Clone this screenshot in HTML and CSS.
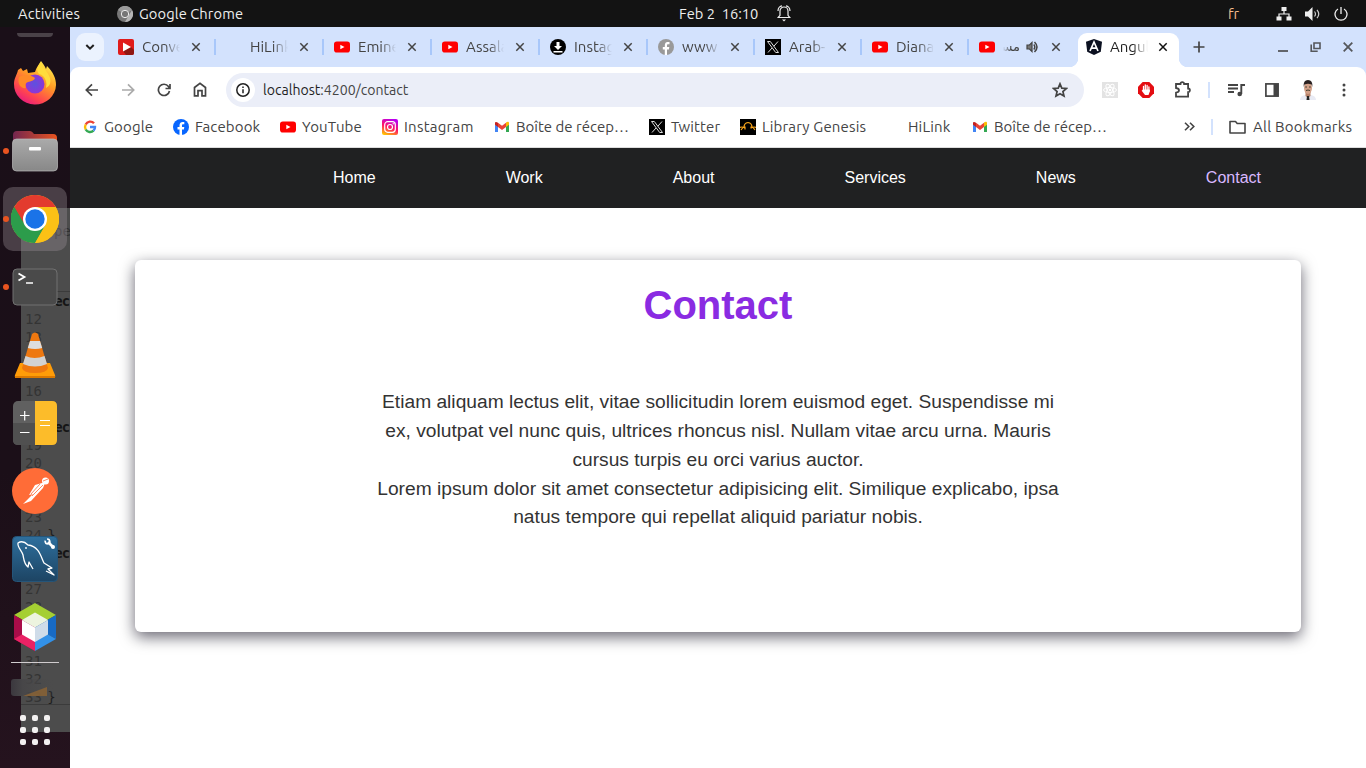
FILE: index.html
```html
<!DOCTYPE html>
<html lang="en">
<head>
<meta charset="utf-8">
<title>Contact</title>
<link rel="stylesheet" href="styles.css">
</head>
<body>
<svg class="defs" width="0" height="0">
  <symbol id="close" viewBox="0 0 16 16"><path d="M4.300 4.300l7.400 7.400M11.700 4.300l-7.400 7.400" fill="none" stroke="currentColor" stroke-width="1.500"/></symbol>
  <symbol id="youtube" viewBox="0 0 16 16"><rect y="2.500" width="16" height="11" rx="2.800" fill="#f00"/><path d="M6.300 5.700l4.200 2.300-4.200 2.300z" fill="#fff"/></symbol>
  <symbol id="x" viewBox="0 0 16 16"><path d="M0 0h16v16H0z" fill="#000"/><path d="M2.500 2.500h2.800l8.200 11h-2.800zM13 2.500L8.900 7.200M7 9l-4 4.500" fill="none" stroke="#ddd" stroke-width="1"/></symbol>
  <symbol id="gmail" viewBox="0 0 16 16"><path d="M1 4.800v8.300h3V7z" fill="#4285f4"/><path d="M12 7v6.100h3V4.800z" fill="#34a853"/><path d="M12 3.500V8l3-2.300V4c0-1.300-1.500-1.600-3-.5z" fill="#fbbc04"/><path d="M4 3.700l4 3 4-3V8l-4 3-4-3z" fill="#ea4335"/><path d="M1 4v1.700L4 8V3.700C2.300 2.400 1 2.800 1 4z" fill="#c5221f"/></symbol>
</svg>

<header class="topbar">
  <span class="activities">Activities</span>
  <span class="app">
    <svg width="16" height="16" viewBox="0 0 16 16"><circle cx="8" cy="8" r="8" fill="#777"/><path d="M8 8L1 4a8 8 0 0 1 14 0z" fill="#999"/><path d="M8 16l4-7 3-5a8 8 0 0 1-7 12z" fill="#b5b5b5"/><circle cx="8" cy="8" r="3.700" fill="#777" stroke="#eee" stroke-width="1"/></svg>
    <span class="appname">Google Chrome</span>
  </span>
  <span class="clock">Feb 2&nbsp; 16:10</span>
  <svg class="bell" width="14" height="17" viewBox="0 0 14 17" fill="none" stroke="#eee" stroke-width="1.200"><path d="M1.200 12.500L3 10.300V6a4 4 0 0 1 8 0v4.300l1.800 2.200zM1 6C1 3 3 1 5 .8M13 6c0-3-2-5-4-5.200"/><path d="M5 14.500h4l-2 2z" fill="#eee" stroke="none"/></svg>
  <span class="lang">fr</span>
  <span class="status">
    <svg width="16" height="14" viewBox="0 0 16 14"><path d="M5.500 0h5v4h-5zM.5 9.500h5v4h-5zM10.500 9.500h5v4h-5z" fill="#eee"/><path d="M8 3v4M3 10V7h10v3" fill="none" stroke="#eee" stroke-width="1.200"/></svg>
    <svg width="16" height="14" viewBox="0 0 16 14"><path d="M0 4.500h3L7.500 0v14L3 9.500H0z" fill="#eee"/><path d="M9.500 4.500q2 2.500 0 5M12 2.800q3.500 4.200 0 8.400" fill="none" stroke="#ccc" stroke-width="1.200"/></svg>
    <svg width="14" height="14" viewBox="0 0 14 14" fill="none" stroke="#eee" stroke-width="1.300"><path d="M4 2a6 6 0 1 0 6 0M7 0v7"/></svg>
  </span>
</header>

<div class="desktop">
  <aside class="dock">
    <pre class="editor">
 

   <b>ec</b>
12
13


16

   <b>ec</b>
19
20


23
24 <s>}</s>
   <b>ec</b>

27
28


31
32
33 <s>}</s></pre>
    <div class="editor-tab">pe</div>
    <div class="rule upper"></div>
    <div class="rule lower"></div>
    <div class="stub"></div>
    <div class="launcher"><svg width="44" height="46" viewBox="0 0 44 46"><defs><linearGradient id="ff" x1=".8" y1="0" x2=".2" y2="1"><stop stop-color="#fff44f"/><stop offset=".4" stop-color="#ff9b25"/><stop offset=".75" stop-color="#ff4450"/><stop offset="1" stop-color="#e31587"/></linearGradient><radialGradient id="ffp"><stop stop-color="#5b52e0"/><stop offset="1" stop-color="#9035d5"/></radialGradient></defs><path d="M22 12C23 8 26 4 28 1c2 3 4 5 5 8l1-3c6 6 9 12 9 19A21 20 0 0 1 1 24C1 18 4 15 5 10l3-2 2 3 4-2 1 4z" fill="url(#ff)"/><circle cx="22" cy="24" r="9.500" fill="url(#ffp)"/><path d="M6 17c5-2 12-2 16 1-1 3-4 3-7 4-3 1-3 4-2 6-5 1-9-4-7-11z" fill="#ff8a28"/><path d="M26 14q5 1 7 7 1 3 0 7 6-3 4-10c-2-6-7-10-9-16-4 5-5 8-2 12z" fill="#ffdc3c"/></svg></div>
    <div class="launcher open"><svg width="46" height="42" viewBox="0 0 46 42"><defs><linearGradient id="fo"><stop stop-color="#73264f"/><stop offset="1" stop-color="#e95420"/></linearGradient><linearGradient id="fg" x2="0" y2="1"><stop stop-color="#aaa"/><stop offset="1" stop-color="#888"/></linearGradient></defs><path d="M1 5q0-4 4-4h13q2 0 4 3h19q4 0 4 4v8H1z" fill="url(#fo)"/><rect x=".5" y="9" width="45" height="32" rx="4" fill="url(#fg)" stroke="#bbb" stroke-width=".7"/><rect x="17" y="17" width="12" height="3.500" rx="1" fill="#fff"/></svg></div>
    <div class="launcher open current"><svg width="48" height="48" viewBox="0 0 48 48"><circle cx="24" cy="24" r="24" fill="#fbc116"/><path d="M24 24L3.200 12A24 24 0 0 1 44.800 12H24z" fill="#e33b2e"/><path d="M3.200 12A24 24 0 0 0 24 48l10.400-18z" fill="#2c9c4b"/><path d="M3.200 12L14 30h20L24 12z" fill="#e33b2e"/><path d="M3.200 12l10.400 18L24 36 34.400 30 24 48A24 24 0 0 1 3.200 12z" fill="#2c9c4b"/><path d="M24 12h20.800A24 24 0 0 1 24 48l10.400-18z" fill="#fbc116"/><circle cx="24" cy="24" r="12" fill="#fff"/><circle cx="24" cy="24" r="9.700" fill="#1a73e8"/></svg></div>
    <div class="launcher open"><svg width="46" height="38" viewBox="0 0 46 38"><rect x="1" y="1" width="44" height="36" rx="4" fill="#4a4a4a" stroke="#707070"/><path d="M6.500 5.500l6 3.500-6 3.500" fill="none" stroke="#fff" stroke-width="1.800"/><path d="M14 15h7" stroke="#fff" stroke-width="1.500"/></svg></div>
    <div class="launcher"><svg width="42" height="47" viewBox="0 0 42 47"><path d="M6 31h30l5 12q1 3-2 3H3q-3 0-2-3z" fill="#ff9c08"/><path d="M1 44h40v2H1z" fill="#db7900"/><path d="M18 2q3-3 6 0l10 34q-1 5-13 5T8 36z" fill="#ee7810"/><path d="M16 9h10l2.200 7q-7 2-14.400 0z" fill="#ddd"/><path d="M11.500 24q9 4 19 0l2.500 8q-12 5-24 0z" fill="#d2d2d2"/></svg></div>
    <div class="launcher"><svg width="44" height="44" viewBox="0 0 44 44"><rect width="44" height="44" rx="5" fill="#606060"/><path d="M0 22h22v22H5q-5 0-5-5z" fill="#505050"/><path d="M22 0h17q5 0 5 5v34q0 5-5 5H22z" fill="#fcbc2a"/><path d="M7 14.500h9.500M11.700 10v9.500M7 31.500h9.500M27 19.500h10M27 24.500h10" stroke="#fff" stroke-width="1.200"/></svg></div>
    <div class="launcher"><svg width="46" height="46" viewBox="0 0 46 46"><circle cx="23" cy="23" r="23" fill="#ff6c37"/><circle cx="33.500" cy="13" r="3.500" fill="#fff"/><path d="M30 15l-7 2-6 10 4-1-4 4-6 6 8-3 12-13 2-5z" fill="#fff"/><path d="M31 17L20 28M28 16l-9 10M31 13l5-2" stroke="#ff6c37" stroke-width=".8"/></svg></div>
    <div class="launcher"><svg width="46" height="46" viewBox="0 0 46 46"><defs><linearGradient id="my" x2="0" y2="1"><stop stop-color="#2e6f9d"/><stop offset="1" stop-color="#1d4463"/></linearGradient></defs><rect x=".5" y=".5" width="45" height="45" rx="4" fill="url(#my)" stroke="#255579"/><path d="M21 33L17 26 16 31C12 28 12 24 11 19 10 15 5 11 6 7 9 5 13 6 16 9 27 10 29 21 32 27L40 32 36 33 42 39 34 35" fill="none" stroke="#fff" stroke-width="1.300" stroke-linejoin="round"/><circle cx="14" cy="12" r=".9" fill="#fff"/><path d="M36 6l5 5" stroke="#fff" stroke-width="2.600"/><circle cx="35.500" cy="5.500" r="2.300" fill="none" stroke="#fff" stroke-width="1.700" stroke-dasharray="11 4" transform="rotate(260 35.500 5.500)"/><circle cx="41" cy="11" r="2" fill="#fff"/></svg></div>
    <div class="launcher"><svg width="42" height="48" viewBox="0 0 42 48"><path d="M21 0l21 12-21 12L0 12z" fill="#a5cf32"/><path d="M0 12l21 12v24L0 36z" fill="#a90d49"/><path d="M0 36l21-12v24z" fill="#ea2265"/><path d="M42 12L21 24l21 12z" fill="#176ac5"/><path d="M42 36L21 24v24z" fill="#3291e8"/><path d="M21 9.500L34 17 21 24.500 8 17z" fill="#edf4df"/><path d="M8 17l13 7.500V39L8 31.500z" fill="#fff"/><path d="M34 17l-13 7.500V39l13-7.500z" fill="#cfdce9"/></svg></div>
    <div class="divider"></div>
    <svg class="drive" width="48" height="17" viewBox="0 0 48 17"><defs><linearGradient id="dr"><stop stop-color="#3b383e"/><stop offset=".25" stop-color="#474648"/><stop offset="1" stop-color="#4c4c4c" stop-opacity="0"/></linearGradient></defs><rect width="46" height="17" rx="3" fill="url(#dr)"/><path d="M12 17l24-9v9z" fill="#8a6335" opacity=".85"/></svg>
    <div class="grid"><i></i><i></i><i></i><i></i><i></i><i></i><i></i><i></i><i></i></div>
  </aside>

  <main class="browser">
    <div class="tabstrip">
      <button class="tabsearch"><svg width="10" height="8" viewBox="0 0 10 8"><path d="M1.300 2l3.700 3.700L8.700 2" fill="none" stroke="#1f1f1f" stroke-width="2"/></svg></button>
      <div class="tabs">
        <div class="tab"><svg class="ico" viewBox="0 0 16 16"><rect width="16" height="16" rx="2" fill="#e01b1b"/><path d="M5 12l8-4 3 3v3q0 2-2 2H8z" fill="#8f1712"/><path d="M5 3.500l8 4.500-8 4.500z" fill="#fff"/></svg><span class="title">Conve</span><svg class="x"><use href="#close"/></svg></div>
        <div class="tab"><span class="ico"></span><span class="title">HiLink</span><svg class="x"><use href="#close"/></svg></div>
        <div class="tab"><svg class="ico"><use href="#youtube"/></svg><span class="title">Emine</span><svg class="x"><use href="#close"/></svg></div>
        <div class="tab"><svg class="ico"><use href="#youtube"/></svg><span class="title">Assala</span><svg class="x"><use href="#close"/></svg></div>
        <div class="tab"><svg class="ico" viewBox="0 0 16 16"><circle cx="8" cy="8" r="8"/><path d="M6.500 3h3v4H12l-4 4-4-4h2.500zM3.500 12h9v1.400h-9z" fill="#fff"/></svg><span class="title">Instag</span><svg class="x"><use href="#close"/></svg></div>
        <div class="tab"><svg class="ico" viewBox="0 0 16 16"><circle cx="8" cy="8" r="8" fill="#999"/><path d="M6.800 16v-5.500h-2V8h2V6.500C6.800 4 8 3 9.500 3h2v2.200H10c-.7 0-1 .4-1 1.100V8h2.300l-.4 2.500H9V16z" fill="#fff"/></svg><span class="title">www</span><svg class="x"><use href="#close"/></svg></div>
        <div class="tab"><svg class="ico"><use href="#x"/></svg><span class="title">Arab-</span><svg class="x"><use href="#close"/></svg></div>
        <div class="tab"><svg class="ico"><use href="#youtube"/></svg><span class="title">Diana</span><svg class="x"><use href="#close"/></svg></div>
        <div class="tab last"><svg class="ico"><use href="#youtube"/></svg><span class="title rtl" dir="rtl">مسـ</span><svg class="sound" width="13" height="12" viewBox="0 0 13 12"><path d="M1 4h2.500L6 1.500v9L3.500 8H1z" fill="#777" stroke="#444" stroke-width="1.200"/><path d="M7.800 3.500q2 2.500 0 5M8.500 1q5 5 0 10" fill="none" stroke="#444" stroke-width="1.500"/></svg><svg class="x"><use href="#close"/></svg></div>
        <div class="tab active"><svg class="ico" viewBox="0 0 16 16"><path d="M8 0l8 2.700-1.200 10L8 16l-6.800-3.300L0 2.700z" fill="#0b1020"/><path d="M4 12l4-9 4 9M5.700 9.200h4.600" fill="none" stroke="#fff" stroke-width="1.700"/></svg><span class="title">Angul</span><svg class="x"><use href="#close"/></svg></div>
      </div>
      <svg class="newtab" width="12" height="12" viewBox="0 0 12 12"><path d="M6 .5v11M.5 6h11" stroke="#444" stroke-width="1.700"/></svg>
      <div class="winctl">
        <svg width="10" height="12" viewBox="0 0 10 12"><path d="M0 10h10" stroke="#55575b" stroke-width="1.800"/></svg>
        <svg width="11" height="12" viewBox="0 0 11 12"><path d="M4 2h6v5.500H4zM1.200 3.500v6.700h6.500" fill="none" stroke="#55575b" stroke-width="1.600"/></svg>
        <svg width="10" height="10" viewBox="0 0 10 10"><path d="M.7.7l8.600 8.600M9.300.7L.7 9.300" stroke="#55575b" stroke-width="1.800"/></svg>
      </div>
    </div>

    <div class="toolbar">
      <div class="navbtns">
        <svg width="14" height="14" viewBox="0 0 14 14" fill="none" stroke="#444" stroke-width="1.700"><path d="M13 7H1.500M7 1.300L1.300 7 7 12.700"/></svg>
        <svg width="14" height="14" viewBox="0 0 14 14" fill="none" stroke="#aaa" stroke-width="1.700"><path d="M1 7h11.500M7 1.300L12.700 7 7 12.700"/></svg>
        <svg width="14" height="14" viewBox="0 0 14 14" fill="none" stroke="#444" stroke-width="1.700"><path d="M12.500 8A5.600 5.600 0 1 1 11.500 3.500L12.500 5M13 1v4.500H8.500"/></svg>
        <svg width="14" height="15" viewBox="0 0 14 15" fill="none" stroke="#444" stroke-width="1.700"><path d="M1.500 5.500L7 1.300l5.500 4.200v8.300H9V8.700H5v5.100H1.500z"/></svg>
      </div>
      <div class="omnibox">
        <span class="info"><svg width="14" height="14" viewBox="0 0 14 14"><circle cx="7" cy="7" r="6.200" fill="none" stroke="#222" stroke-width="1.500"/><path d="M7 6.200v4M7 3.400v1.500" stroke="#222" stroke-width="1.500"/></svg></span>
        <span class="url"><b>localhost</b>:4200/contact</span>
        <svg class="star" width="16" height="16" viewBox="0 0 16 16"><path d="M8 1.800l1.800 4.300 4.600.4-3.500 3 1.100 4.600L8 11.700l-4 2.400 1.100-4.600-3.500-3 4.600-.4z" fill="none" stroke="#444" stroke-width="1.700"/></svg>
      </div>
      <div class="ext">
        <svg width="16" height="16" viewBox="0 0 16 16"><path d="M0 0h16v16H0z" fill="#e3e3e3"/><g fill="none" stroke="#fff"><ellipse cx="8" cy="8" rx="6.500" ry="2.500"/><ellipse cx="8" cy="8" rx="6.500" ry="2.500" transform="rotate(60 8 8)"/><ellipse cx="8" cy="8" rx="6.500" ry="2.500" transform="rotate(120 8 8)"/></g><circle cx="8" cy="8" r="1.200" fill="#fff"/></svg>
        <svg width="16" height="16" viewBox="0 0 16 16"><path d="M4.700 0h6.600L16 4.700v6.600L11.300 16H4.700L0 11.300V4.700z" fill="#e40d12"/><path d="M5.500 9V4.500M7.300 8V3M9.100 8V3.500M10.900 9V5" stroke="#fff" stroke-width="1.300" stroke-linecap="round"/><path d="M4.900 7.500h6.700L12 9l-1.500 4H7L3.700 8.800z" fill="#fff"/></svg>
        <svg width="18" height="17" viewBox="0 0 18 17"><path d="M2 3h4.500a1.800 1.800 0 0 1 3.600 0h4v4.500a1.800 1.800 0 0 1 0 3.600V15.700H2v-4q3-.5 3-2.400T2 7z" fill="none" stroke="#444" stroke-width="1.800"/></svg>
        <i class="vsep"></i>
        <svg width="17" height="14" viewBox="0 0 17 14"><path d="M0 2h10M0 5.500h10M0 9h6M13.300 11V2H17" fill="none" stroke="#444" stroke-width="1.900"/><circle cx="11.700" cy="11" r="2.300" fill="#444"/></svg>
        <svg width="14" height="14" viewBox="0 0 14 14"><rect x=".9" y=".9" width="12.200" height="12.200" fill="none" stroke="#444" stroke-width="1.700"/><path d="M8.500 1H13v12H8.500z" fill="#444"/></svg>
        <svg width="18" height="20" viewBox="0 0 18 20"><path d="M1 20q0-4 5-5h6q5 1 5 5z" fill="#e9ebf4"/><path d="M6.500 12h5v4L9 18l-2.500-2z" fill="#b78269"/><ellipse cx="9" cy="8" rx="4" ry="6" fill="#d2a088"/><path d="M4.700 7Q4 0 9 0t4.300 7l-.8-2.500q-3.500-1.500-7 0z" fill="#29201f"/><path d="M7 10.500q2-1 4 0M6.200 7h1.800M10 7h1.800" stroke="#332" fill="none" stroke-width=".9"/><path d="M8 16h2l.5 4h-3z" fill="#222"/></svg>
        <svg class="menu" width="4" height="14" viewBox="0 0 4 14" fill="#444"><circle cx="2" cy="2" r="1.500"/><circle cx="2" cy="7" r="1.500"/><circle cx="2" cy="12" r="1.500"/></svg>
      </div>
    </div>

    <div class="bookmarks">
      <div class="marks">
        <span class="mark"><svg class="ico" viewBox="0 0 16 16" fill="none" stroke-width="2.400"><path d="M12 4.300A5 5 0 0 0 3.700 5.500" stroke="#ea4335"/><path d="M3.700 5.500a5 5 0 0 0 0 5" stroke="#fbbc04"/><path d="M3.700 10.500a5 5 0 0 0 7.800 1.200" stroke="#34a853"/><path d="M11.500 11.700A5 5 0 0 0 13 8H8" stroke="#4285f4"/></svg><span>Google</span></span>
        <span class="mark"><svg class="ico" viewBox="0 0 16 16"><circle cx="8" cy="8" r="8" fill="#0866ff"/><path d="M6.500 16v-5.500h-2V8h2V6.500C6.500 4 8 3 9.500 3h1.800v2.200H10c-.7 0-1 .4-1 1.100V8h2.300l-.4 2.500H9V16z" fill="#fff"/></svg><span>Facebook</span></span>
        <span class="mark"><svg class="ico"><use href="#youtube"/></svg><span>YouTube</span></span>
        <span class="mark"><svg class="ico" viewBox="0 0 16 16"><defs><linearGradient id="ig" x1=".2" y1="1" x2=".6" y2="0"><stop stop-color="#ffc800"/><stop offset=".5" stop-color="#ff1565"/><stop offset="1" stop-color="#b900f0"/></linearGradient></defs><rect width="16" height="16" rx="2" fill="url(#ig)"/><g fill="none" stroke="#fff" stroke-width="1.200"><rect x="2.700" y="2.700" width="10.600" height="10.600" rx="3"/><circle cx="8" cy="8" r="2.500"/></g><circle cx="11.200" cy="4.800" r=".7" fill="#fff"/></svg><span class="wide">Instagram</span></span>
        <span class="mark"><svg class="ico"><use href="#gmail"/></svg><span class="snug">Boîte de récep…</span></span>
        <span class="mark"><svg class="ico"><use href="#x"/></svg><span>Twitter</span></span>
        <span class="mark"><svg class="ico" viewBox="0 0 16 16"><path d="M0 0h16v16H0z"/><path d="M0 8.500q2-1 4 0 0-4.500 4-5 4 .5 4 5 2-1 4 0M3 8.500L1 11M13 8.500l2 2.500M5 7.500v3M11 7.500v2" fill="none" stroke="#f9a51a" stroke-width="1.200"/></svg><span>Library Genesis</span></span>
        <span class="mark"><span class="ico"></span><span>HiLink</span></span>
        <span class="mark"><svg class="ico"><use href="#gmail"/></svg><span class="snug">Boîte de récep…</span></span>
      </div>
      <svg class="more" width="11" height="9" viewBox="0 0 11 9"><path d="M1 .7l3.800 3.800L1 8.300M6 .7l3.800 3.800L6 8.300" fill="none" stroke="#444" stroke-width="1.600"/></svg>
      <i class="vsep"></i>
      <svg class="folder" width="17" height="14" viewBox="0 0 17 14"><path d="M1 1.500h5.500l1.700 2H16v9.500H1z" fill="none" stroke="#444" stroke-width="1.600" stroke-linejoin="round"/></svg>
      <span class="wide">All Bookmarks</span>
    </div>

    <div class="page">
      <nav class="sitenav"><a>Home</a><a>Work</a><a>About</a><a>Services</a><a>News</a><a class="on">Contact</a></nav>
      <section class="card">
        <h1>Contact</h1>
        <p>Etiam aliquam lectus elit, vitae sollicitudin lorem euismod eget. Suspendisse mi ex, volutpat vel nunc quis, ultrices rhoncus nisl. Nullam vitae arcu urna. Mauris cursus turpis eu orci varius auctor.<br>Lorem ipsum dolor sit amet consectetur adipisicing elit. Similique explicabo, ipsa natus tempore qui repellat aliquid pariatur nobis.</p>
      </section>
    </div>
  </main>
</div>
</body>
</html>
```
FILE: styles.css
```css
* { box-sizing: border-box; }
body { margin: 0; width: 1366px; height: 768px; overflow: hidden; font: 15px Ubuntu, "Noto Sans", sans-serif; display: flex; flex-direction: column; color: #444; background: #fff; }
svg { display: block; flex: none; }
.defs { position: absolute; }

.topbar { height: 27px; background: #131313; color: #eee; display: flex; align-items: center; white-space: nowrap; font-size: 14.670px; flex: none; }
.activities { width: 99px; margin-left: 18px; letter-spacing: .2px; }
.app { display: flex; gap: 6px; align-items: center; width: 562px; letter-spacing: .1px; }
.clock { width: 98px; }
.bell { width: 14px; }
.lang { margin-left: 437px; width: 48px; color: #f6bd8c; }
.status { display: flex; gap: 13px; align-items: center; }

.desktop { flex: 1; display: flex; min-height: 0; }
.dock { position: relative; width: 70px; flex: none; background: linear-gradient(#1a0f18, #1b0f18 60%, #25131e); display: flex; flex-direction: column; align-items: center; overflow: hidden; }
.editor { position: absolute; left: 21px; top: 181px; width: 49px; height: 524px; margin: 0; padding: 48px 0 0 4px; background: #4c4c4c; color: #343434; font: 14px/18px "DejaVu Sans Mono", monospace; overflow: hidden; }
.editor b { color: #151515; margin-left: 4px; letter-spacing: -1px; }
.editor s { color: #202020; margin-left: -3px; text-decoration: none; }
.editor-tab { position: absolute; left: 54px; top: 195px; font: 14px/18px "DejaVu Sans Mono", monospace; color: #303030; }
.rule { position: absolute; left: 21px; width: 49px; height: 1px; background: #3b3b3b; }
.upper { top: 264px; }
.lower { top: 677px; }
.stub { width: 36px; height: 4px; margin-top: 6px; border-radius: 0 0 4px 4px; background: #4a4248; flex: none; }
.stub ~ .launcher { z-index: 1; }
.editor ~ .stub + .launcher { margin-top: 14px; }
.launcher { position: relative; width: 64px; height: 64px; margin-bottom: 4px; flex: none; border-radius: 10px; display: flex; align-items: center; justify-content: center; }
.open::before { content: ""; position: absolute; left: 0; top: 29px; width: 6px; height: 6px; border-radius: 50%; background: #e95420; }
.current { background: rgba(150, 140, 148, .38); }
.divider { position: relative; width: 48px; height: 1px; background: #d0ccce; flex: none; margin-top: -1px; }
.drive { position: relative; margin-top: 16px; }
.grid { position: relative; display: grid; grid-template-columns: repeat(3, 6px); gap: 6px; margin-top: 19px; }
.grid i { width: 6px; height: 6px; border-radius: 2px; background: #f2f0f0; }

.browser { flex: 1; min-width: 0; display: flex; flex-direction: column; background: #d3e2fd; }
.tabstrip { height: 40px; display: flex; flex: none; }
.tabsearch { width: 28px; height: 28px; margin: 6px 4px 0 6px; border: 0; border-radius: 9px; background: #ebf2fe; display: flex; align-items: center; justify-content: center; padding: 0; }
.tabs { display: grid; grid-template-columns: repeat(5, 108px) repeat(5, 107px); padding-top: 6px; }
.tab { position: relative; height: 34px; padding: 0 0 7px 10px; display: flex; align-items: center; }
.tab::after { content: ""; position: absolute; right: 0; top: 6px; width: 2px; height: 16px; background: #a8c7fa; }
.tab.last::after, .tab.active::after { display: none; }
.ico { width: 16px; height: 16px; flex: none; }
.title { margin-left: 8px; width: 38px; flex: none; overflow: hidden; white-space: nowrap; -webkit-mask-image: linear-gradient(90deg, #000 60%, transparent); mask-image: linear-gradient(90deg, #000 60%, transparent); }
.title.rtl { width: 17px; margin-left: 8px; font-family: "DejaVu Sans", sans-serif; font-size: 13px; -webkit-mask-image: linear-gradient(270deg, #000 50%, transparent); mask-image: linear-gradient(270deg, #000 50%, transparent); }
.sound { margin: 0 6px 0 6px; }
.x { width: 16px; height: 16px; margin-left: 8px; color: #444; }
.tab:nth-child(n+6) .x { margin-left: 7px; }
.tab.last .x { margin-left: 3px; }
.active { background: #fff; border-radius: 9px 9px 0 0; color: #222; width: 101px; margin-left: 2px; padding-left: 8px; }
.active::before { content: ""; position: absolute; left: -9px; right: -9px; bottom: 0; height: 9px; background: radial-gradient(circle at 0 0, transparent 9px, #fff 9.500px) left / 9px 9px no-repeat, radial-gradient(circle at 100% 0, transparent 9px, #fff 9.500px) right / 9px 9px no-repeat; }
.active .x { color: #111; }
.newtab { margin: 14px 0 0 10px; }
.winctl { display: flex; gap: 22px; align-items: center; margin-left: auto; padding-right: 13px; }

.toolbar { height: 45px; flex: none; background: #fff; border-radius: 9px 9px 0 0; display: flex; align-items: center; padding-left: 15px; }
.navbtns { display: flex; gap: 22px; width: 141px; align-items: center; }
.omnibox { width: 858px; height: 34px; border-radius: 17px; background: #ebeef8; display: flex; align-items: center; padding: 0 16px 0 5px; }
.info { width: 24px; height: 24px; border-radius: 50%; background: #fff; display: flex; align-items: center; justify-content: center; }
.url { margin-left: 8px; font-size: 14.100px; }
.url b { font-weight: 400; color: #1f1f1f; }
.star { margin-left: auto; }
.ext { display: flex; align-items: center; gap: 20px; padding-left: 18px; }
.vsep { width: 2px; height: 16px; background: #d3e2fd; flex: none; }
.ext .vsep { margin: 0 -2px 0 -4px; }
.menu { margin-left: 5px; }

.bookmarks { height: 36px; flex: none; background: #fff; border-bottom: 1px solid #ddd; display: flex; align-items: center; padding: 0 0 6px 12px; white-space: nowrap; letter-spacing: .15px; }
.marks { display: grid; grid-template-columns: 91px 107px 102px 112px 155px 91px 146px 86px 140px; width: 1102px; flex: none; }
.mark { display: flex; align-items: center; gap: 6px; }
.snug { letter-spacing: 0; }
.wide { letter-spacing: .25px; }
.bookmarks .vsep { margin: 0 16px 0 16px; }
.folder { margin-right: 7px; }

.page { flex: 1; background: #fff; font-family: "Liberation Sans", Arial, sans-serif; }
.sitenav { height: 60px; background: #202122; color: #fff; display: flex; gap: 130px; align-items: center; justify-content: flex-end; padding-right: 105px; font-size: 16px; }
.sitenav .on { color: #d9b8ff; }
.card { margin: 52px 65px 0; height: 372px; border-radius: 6px; background: #fff; text-align: center; box-shadow: 0 5px 15px rgba(5, 0, 20, .6); padding-top: 22px; }
.card h1 { margin: 0; font-size: 40px; line-height: 46px; color: #8a2be2; }
.card p { margin: 60.200px auto 0; width: 700px; font-size: 19.200px; line-height: 28.800px; color: #333; }
```
